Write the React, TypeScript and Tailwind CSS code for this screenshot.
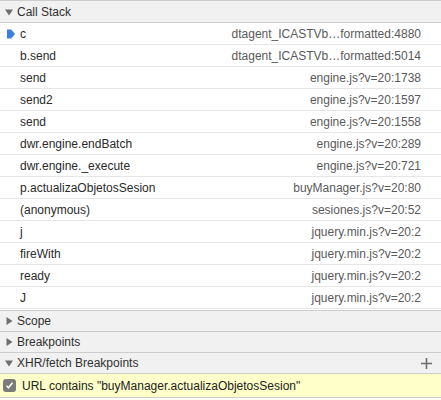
const frames: [string, string][] = [
  ['c', 'dtagent_ICASTVb…formatted:4880'],
  ['b.send', 'dtagent_ICASTVb…formatted:5014'],
  ['send', 'engine.js?v=20:1738'],
  ['send2', 'engine.js?v=20:1597'],
  ['send', 'engine.js?v=20:1558'],
  ['dwr.engine.endBatch', 'engine.js?v=20:289'],
  ['dwr.engine._execute', 'engine.js?v=20:721'],
  ['p.actualizaObjetosSesion', 'buyManager.js?v=20:80'],
  ['(anonymous)', 'sesiones.js?v=20:52'],
  ['j', 'jquery.min.js?v=20:2'],
  ['fireWith', 'jquery.min.js?v=20:2'],
  ['ready', 'jquery.min.js?v=20:2'],
  ['J', 'jquery.min.js?v=20:2'],
];

function Triangle({ open }: { open: boolean }) {
  return (
    <svg width="8" height="8" viewBox="0 0 8 8" className="shrink-0">
      {open ? <path d="M0 1.5h8L4 7.5z" fill="#6e6e6e" /> : <path d="M1.5 0v8L7.5 4z" fill="#6e6e6e" />}
    </svg>
  );
}

function SectionHeader({ title, open, plus }: { title: string; open: boolean; plus?: boolean }) {
  return (
    <div className="h-[21px] flex items-center pl-[5px] pr-[9px] bg-[#f1f1f1] border-b border-[#cdcdcd] text-[#303030]">
      <Triangle open={open} />
      <span className="ml-[4px] flex-1">{title}</span>
      {plus && (
        <svg width="11" height="11" viewBox="0 0 11 11">
          <path d="M5.5 0v11M0 5.5h11" stroke="#6e6e6e" strokeWidth="1.6" />
        </svg>
      )}
    </div>
  );
}

export default function App() {
  return (
    <div
      className="w-[441px] h-[400px] bg-white text-[12px] overflow-hidden"
      style={{ fontFamily: '"Liberation Sans", Arial, sans-serif' }}
    >
      <div className="border-t border-[#cdcdcd]">
        <div className="h-[22px] flex items-center pl-[5px] bg-[#f1f1f1] border-b border-[#cdcdcd] text-[#303030]">
          <Triangle open />
          <span className="ml-[4px]">Call Stack</span>
        </div>
        {frames.map(([name, loc], i) => (
          <div key={i} className="h-[22px] flex items-center border-b border-[#e6e6e6] pr-[20px]">
            <div className="w-[20px] flex justify-center pl-[1px]">
              {i === 0 && (
                <svg width="8" height="10" viewBox="0 0 8 10">
                  <path d="M0 0.5h4.2L8 5 4.2 9.5H0z" fill="#3a7de6" />
                </svg>
              )}
            </div>
            <span className="flex-1 text-[#2a2a2a]">{name}</span>
            <span className="text-[#5a5a5a]">{loc}</span>
          </div>
        ))}
        <div className="h-[2px] border-b border-[#cdcdcd]" />
        <SectionHeader title="Scope" open={false} />
        <SectionHeader title="Breakpoints" open={false} />
        <SectionHeader title="XHR/fetch Breakpoints" open plus />
        <div className="h-[24px] flex items-center bg-[#ffffc9] border-b border-[#cdcdcd] pl-[3px] text-[#222]">
          <div className="w-[13px] h-[13px] rounded-[3px] bg-[#7b7b7b] flex items-center justify-center">
            <svg width="9" height="9" viewBox="0 0 9 9">
              <path d="M1.5 4.8l2 2 4-5" stroke="white" strokeWidth="1.6" fill="none" />
            </svg>
          </div>
          <span className="ml-[6px]">URL contains "buyManager.actualizaObjetosSesion"</span>
        </div>
      </div>
    </div>
  );
}
